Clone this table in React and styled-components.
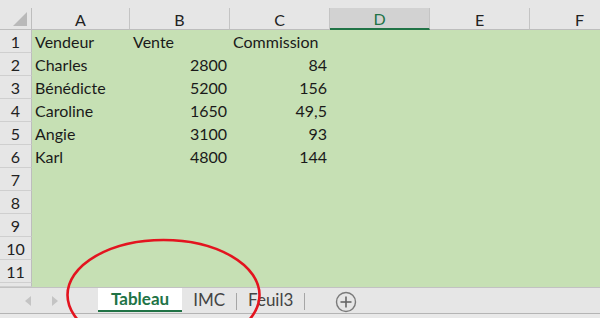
import React from 'react';
import styled, { createGlobalStyle } from 'styled-components';

const GlobalStyle = createGlobalStyle`
  html, body {
    margin: 0;
    padding: 0;
    background: #e6e6e6;
    overflow: hidden;
  }
  * {
    box-sizing: border-box;
  }
`;

const Window = styled.div`
  position: relative;
  width: 600px;
  height: 318px;
  overflow: hidden;
  background: #e6e6e6;
  font-family: Lato, "Liberation Sans", sans-serif;
  color: #1a1a1a;
`;

const TopStrip = styled.div`
  height: 8px;
  background: #e6e6e6;
`;

const Sheet = styled.div`
  display: grid;
  grid-template-columns: 32px 98px repeat(5, 100px);
  grid-template-rows: 22px repeat(11, 23px) 4px;
  width: 630px;
`;

const Corner = styled.div`
  background: #e6e6e6;
  border-right: 1px solid #bdbdbd;
  border-bottom: 1px solid #bdbdbd;
  display: flex;
  align-items: flex-end;
  justify-content: flex-end;
  padding: 0 4px 3px 0;
`;

const ColHeader = styled.div`
  background: ${(p) => (p.$selected ? '#d2d2d2' : '#e6e6e6')};
  border-right: 1px solid #c4c4c4;
  border-bottom: ${(p) => (p.$selected ? '2px solid #217346' : '1px solid #bdbdbd')};
  color: ${(p) => (p.$selected ? '#217346' : '#222')};
  font-size: 16px;
  display: flex;
  align-items: center;
  justify-content: center;
  padding-top: 1px;
`;

const RowHeader = styled.div`
  background: #e6e6e6;
  border-right: 1px solid #bdbdbd;
  border-bottom: 1px solid #cfcfcf;
  color: #222;
  font-size: 16px;
  display: flex;
  align-items: center;
  justify-content: center;
  padding-top: 1px;
`;

const Cell = styled.div`
  background: #c6e0b4;
  font-size: 16px;
  display: flex;
  align-items: flex-end;
  justify-content: ${(p) => (p.$num ? 'flex-end' : 'flex-start')};
  padding: 0 3px 2px 3px;
  white-space: nowrap;
  overflow: visible;
`;

const TabBar = styled.div`
  display: flex;
  align-items: stretch;
  height: 27px;
  background: #e6e6e6;
  border-bottom: 1px solid #b4b4b4;
  border-top: 1px solid #c2c2c2;
`;

const NavArea = styled.div`
  width: 98px;
  display: flex;
  align-items: center;
  gap: 19px;
  padding-left: 24px;
`;

const Arrow = styled.svg`
  width: 8px;
  height: 10px;
  fill: #c4c4c4;
`;

const Tab = styled.div`
  display: flex;
  align-items: center;
  justify-content: center;
  height: 24px;
  padding: 0 ${(p) => (p.$pad || 12)}px;
  font-size: 17px;
  background: ${(p) => (p.$active ? '#ffffff' : 'transparent')};
  color: ${(p) => (p.$active ? '#217346' : '#444')};
  font-weight: ${(p) => (p.$active ? 700 : 400)};
  border-bottom: ${(p) => (p.$active ? '2px solid #217346' : 'none')};
  padding-bottom: ${(p) => (p.$active ? 1 : 2)}px;
`;

const TabSep = styled.div`
  width: 1px;
  background: #a6a6a6;
  margin: 5px 0 3px;
`;

const AddButton = styled.svg`
  width: 22px;
  height: 22px;
  margin: 3px 0 0 30px;
`;

const Bottom = styled.div`
  height: 4px;
  background: #e9e9e9;
`;

const Annotation = styled.svg`
  position: absolute;
  left: 0;
  top: 0;
  width: 600px;
  height: 318px;
  pointer-events: none;
`;

const columns = ['A', 'B', 'C', 'D', 'E', 'F'];

const rows = [
  ['Vendeur', 'Vente', 'Commission'],
  ['Charles', '2800', '84'],
  ['Bénédicte', '5200', '156'],
  ['Caroline', '1650', '49,5'],
  ['Angie', '3100', '93'],
  ['Karl', '4800', '144'],
];

const App = () => {
  const body = [];
  for (let r = 0; r < 12; r++) {
    const data = rows[r] || [];
    body.push(
      <RowHeader key={`h${r}`}>{r < 11 ? r + 1 : ''}</RowHeader>
    );
    for (let c = 0; c < 6; c++) {
      const v = data[c] || '';
      const num = r > 0 && c > 0 && v !== '';
      body.push(
        <Cell key={`c${r}-${c}`} $num={num}>
          {v}
        </Cell>
      );
    }
  }

  return (
    <Window>
      <GlobalStyle />
      <TopStrip />
      <Sheet>
        <Corner>
          <svg width="14" height="14" viewBox="0 0 14 14">
            <polygon points="14,0 14,14 0,14" fill="#b9b9b9" />
          </svg>
        </Corner>
        {columns.map((c) => (
          <ColHeader key={c} $selected={c === 'D'}>
            {c}
          </ColHeader>
        ))}
        {body}
      </Sheet>
      <TabBar>
        <NavArea>
          <Arrow viewBox="0 0 8 10">
            <polygon points="7,0 7,10 1,5" />
          </Arrow>
          <Arrow viewBox="0 0 8 10">
            <polygon points="1,0 1,10 7,5" />
          </Arrow>
        </NavArea>
        <Tab $active $pad={13}>Tableau</Tab>
        <Tab $pad={11}>IMC</Tab>
        <TabSep />
        <Tab $pad={11}>Feuil3</Tab>
        <TabSep />
        <AddButton viewBox="0 0 22 22">
          <circle cx="11" cy="11" r="9.5" fill="none" stroke="#7a7a7a" strokeWidth="1.4" />
          <line x1="11" y1="5.5" x2="11" y2="16.5" stroke="#666" strokeWidth="1.6" />
          <line x1="5.5" y1="11" x2="16.5" y2="11" stroke="#666" strokeWidth="1.6" />
        </AddButton>
      </TabBar>
      <Bottom />
      <Annotation viewBox="0 0 600 318">
        <ellipse
          cx="163.5"
          cy="295"
          rx="96"
          ry="55"
          fill="none"
          stroke="#e3141f"
          strokeWidth="2.6"
        />
      </Annotation>
    </Window>
  );
};

export default App;
